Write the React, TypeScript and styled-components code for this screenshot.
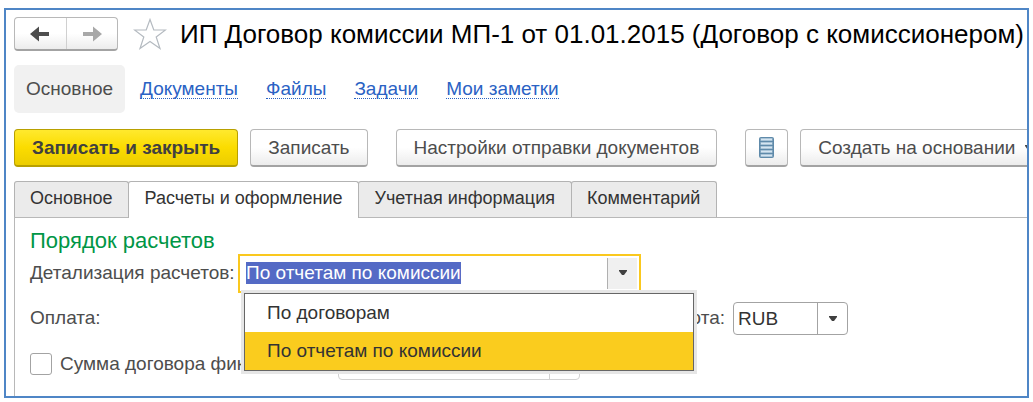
import React, { useEffect, useRef, useState } from "react";
import styled, { createGlobalStyle, css } from "styled-components";

const GlobalStyle = createGlobalStyle`
  * { box-sizing: border-box; }
  body {
    margin: 0;
    background: #ffffff;
    color: #4d4d4d;
    font: 19px/22px "Liberation Sans", Arial, sans-serif;
  }
  button, input, select { font: inherit; color: inherit; }
`;

const Page = styled.div`
  display: flex;
  flex-direction: column;
  min-height: 100vh;
  padding: 8px 4px 4px;
`;

const Frame = styled.main`
  display: flex;
  flex: 1;
  flex-direction: column;
  overflow: hidden;
  padding: 7px 0 0 8px;
  border: 2px solid #4f86c6;
  white-space: nowrap;
`;

const TitleBar = styled.header`
  display: flex;
  align-items: center;
  height: 34px;
`;

const raised = css`
  border: 1px solid #b8b8b8;
  border-bottom: 2px solid #a3a3a3;
  border-radius: 4px;
  background: linear-gradient(#ffffff 50%, #ececec);
`;

const History = styled.div`
  display: flex;
  flex: none;
  width: 104px;
  height: 34px;
  ${raised}
`;

const HistoryButton = styled.button`
  display: flex;
  flex: 1;
  align-items: center;
  justify-content: center;
  padding: 0;
  border: 0;
  background: none;
  color: #4d4d4d;

  & + & {
    border-left: 1px solid #d0d0d0;
    color: #a8a8a8;
  }
`;

const StarButton = styled.button`
  display: flex;
  flex: none;
  margin: 0 13px 0 15px;
  padding: 0;
  border: 0;
  background: none;
`;

const Title = styled.h1`
  margin: 0;
  color: #000000;
  font-size: 26px;
  font-weight: 400;
  line-height: 34px;
`;

const Nav = styled.nav`
  display: flex;
  align-items: center;
  gap: 28px;
  margin-top: 14px;
`;

const CurrentSection = styled.span`
  margin-right: -13px;
  padding: 13px 12px;
  border-radius: 5px;
  background: #f1f1f1;
`;

const SectionLink = styled.a`
  border-bottom: 1px dotted #2a62c4;
  color: #2a62c4;
  line-height: 19px;
  text-decoration: none;
`;

const Toolbar = styled.div`
  display: flex;
  gap: 28px;
  margin-top: 16px;
`;

const ButtonGroup = styled.div`
  display: flex;
  gap: 12px;
`;

const Button = styled.button<{ $primary?: boolean }>`
  display: flex;
  flex: none;
  align-items: center;
  gap: 10px;
  height: 38px;
  padding: 0 17px;
  ${raised}
  ${({ $primary }) =>
    $primary &&
    css`
      border-color: #b8a000;
      background: linear-gradient(#ffe92e, #fbdc00 50%, #eccd00);
      color: #404040;
      font-weight: 700;
    `}
`;

const IconButton = styled(Button)`
  padding: 0 13px;
`;

const Tabs = styled.div`
  display: flex;
  margin-top: 14px;
  border-bottom: 1px solid #b8b8b8;
`;

const Tab = styled.button<{ $active?: boolean }>`
  height: 36px;
  margin-right: -1px;
  padding: 0 16px 3px 15px;
  border: 1px solid #b3b3b3;
  border-bottom: 0;
  border-radius: 3px 3px 0 0;
  background: #ebebeb;
  color: #333333;
  font-size: 18px;
  ${({ $active }) =>
    $active &&
    css`
      z-index: 1;
      height: 37px;
      margin-bottom: -1px;
      padding-bottom: 4px;
      background: #ffffff;
    `}
`;

const Panel = styled.section`
  flex: 1;
  padding: 10px 15px 16px;
  border-left: 1px solid #b8b8b8;
`;

const GroupTitle = styled.h2`
  margin: 0;
  color: #009646;
  font-size: 22px;
  font-weight: 400;
  line-height: 26px;
`;

const Row = styled.div`
  display: flex;
  align-items: center;
`;

const Label = styled.label`
  flex: none;
  width: 208px;
  padding-bottom: 2px;
`;

const SideLabel = styled.label`
  flex: none;
  width: 487px;
  margin-right: 8px;
  padding-bottom: 2px;
  text-align: right;
`;

const Combo = styled.div`
  position: relative;
  display: flex;
  width: 403px;
  height: 39px;
  padding: 2px;
  border: 2px solid #fac81e;
  background: #ffffff;
`;

const ComboInput = styled.input`
  flex: 1;
  min-width: 0;
  padding: 0 4px 2px;
  border: 0;
  outline: 0;
  background: none;

  &::selection {
    background: rgba(82, 104, 196, 0.99);
    color: #ffffff;
  }
`;

const ComboToggle = styled.button`
  display: flex;
  align-items: center;
  justify-content: center;
  width: 30px;
  padding: 0 0 2px;
  border: 0;
  border-left: 1px solid #b0b0b0;
  background: #f0f0f0;
  color: #404040;
`;

const Options = styled.ul`
  position: absolute;
  z-index: 2;
  top: 37px;
  left: 4px;
  width: 450px;
  margin: 0;
  padding: 0;
  border: 1px solid #666666;
  background: #ffffff;
  box-shadow: 0 0 0 3px #e6e6e6;
  list-style: none;
`;

const Option = styled.li`
  padding: 8px 22px;
  color: #333333;
  cursor: default;

  &[aria-selected="true"] {
    background: #facc1e;
  }
`;

const PaymentRow = styled(Row)`
  margin-top: 9px;
`;

const SelectBox = styled.span`
  display: grid;
  grid-template-columns: 1fr 30px;
  width: 115px;
  height: 33px;
  border: 1px solid #a3a3a3;
  border-radius: 4px;
`;

const Select = styled.select`
  grid-area: 1 / 1 / 2 / 3;
  padding: 0 4px;
  border: 0;
  outline: 0;
  background: none;
  color: #333333;
  appearance: none;
`;

const SelectArrow = styled.span`
  display: flex;
  grid-area: 1 / 2;
  align-items: center;
  justify-content: center;
  border-left: 1px solid #a3a3a3;
  color: #404040;
  pointer-events: none;
`;

const AmountRow = styled(Row)`
  margin-top: 12px;
`;

const CheckLabel = styled.label`
  display: flex;
  flex: none;
  align-items: center;
  gap: 8px;
  width: 308px;
`;

const Checkbox = styled.input`
  flex: none;
  width: 22px;
  height: 22px;
  margin: 0;
  border: 1px solid #a3a3a3;
  border-radius: 3px;
  appearance: none;
  background: #ffffff;

  &:checked {
    background: #facc1e;
  }
`;

const AmountBox = styled.span`
  display: grid;
  grid-template-columns: 1fr 30px;
  width: 242px;
  height: 33px;
  border: 1px solid #d2d2d2;
  border-radius: 4px;
`;

const AmountInput = styled.input`
  min-width: 0;
  padding: 0 4px;
  border: 0;
  outline: 0;
  background: none;
`;

const AmountButton = styled.button`
  padding: 0;
  border: 0;
  border-left: 1px solid #d2d2d2;
  background: none;
`;

const ArrowIcon = ({ right }: { right?: boolean }) => (
  <svg width="20" height="16" viewBox="0 0 20 16" aria-hidden="true">
    <path
      d={right ? "M20 8 11 0.5v5.5H1v4h10v5.5z" : "M0 8 9 0.5v5.5h10v4H9v5.5z"}
      fill="currentColor"
    />
  </svg>
);

const Caret = () => (
  <svg width="8" height="5" viewBox="0 0 8 5" aria-hidden="true">
    <path d="M0 0h8v1L5 5H3L0 1z" fill="currentColor" />
  </svg>
);

const StarIcon = () => (
  <svg width="34" height="32" viewBox="0 0 34 32" aria-hidden="true">
    <path
      d="M17 1.5 20.8 12H32.5L23.2 19 27 30.5 17 23.6 7 30.5 10.8 19 1.5 12H13.2z"
      fill="#ffffff"
      stroke="#b4bac0"
      strokeWidth="1.2"
    />
  </svg>
);

const ListIcon = () => (
  <svg width="15" height="21" viewBox="0 0 15 21" aria-hidden="true">
    <rect x="0.5" y="0.5" width="14" height="20" rx="1" fill="#7fa3bd" stroke="#5f8aaa" />
    <path d="M2 2.5h11M2 6.5h11M2 10.5h11M2 14.5h11M2 18.5h11" stroke="#d5e5f1" strokeWidth="2" />
    <path d="M0 4.5h15M0 8.5h15M0 12.5h15M0 16.5h15" stroke="#5f8aaa" />
  </svg>
);

const sections = ["Документы", "Файлы", "Задачи", "Мои заметки"];
const tabs = ["Основное", "Расчеты и оформление", "Учетная информация", "Комментарий"];
const details = ["По договорам", "По отчетам по комиссии"];

export default function App() {
  const [tab, setTab] = useState(tabs[1]);
  const [detail, setDetail] = useState(details[1]);
  const [open, setOpen] = useState(true);
  const detailRef = useRef<HTMLInputElement>(null);

  useEffect(() => {
    detailRef.current?.focus();
    detailRef.current?.select();
  }, []);

  return (
    <Page>
      <GlobalStyle />
      <Frame>
        <TitleBar>
          <History>
            <HistoryButton type="button" aria-label="Назад">
              <ArrowIcon />
            </HistoryButton>
            <HistoryButton type="button" aria-label="Вперед">
              <ArrowIcon right />
            </HistoryButton>
          </History>
          <StarButton type="button" aria-label="Избранное">
            <StarIcon />
          </StarButton>
          <Title>ИП Договор комиссии МП-1 от 01.01.2015 (Договор с комиссионером)</Title>
        </TitleBar>

        <Nav>
          <CurrentSection aria-current="page">Основное</CurrentSection>
          {sections.map((name) => (
            <SectionLink key={name} href="#">
              {name}
            </SectionLink>
          ))}
        </Nav>

        <Toolbar>
          <ButtonGroup>
            <Button type="button" $primary>
              Записать и закрыть
            </Button>
            <Button type="button">Записать</Button>
          </ButtonGroup>
          <Button type="button">Настройки отправки документов</Button>
          <ButtonGroup>
            <IconButton type="button" aria-label="Список">
              <ListIcon />
            </IconButton>
            <Button type="button">
              Создать на основании
              <Caret />
            </Button>
          </ButtonGroup>
        </Toolbar>

        <Tabs role="tablist">
          {tabs.map((name) => (
            <Tab
              key={name}
              type="button"
              role="tab"
              aria-selected={name === tab}
              $active={name === tab}
              onClick={() => setTab(name)}
            >
              {name}
            </Tab>
          ))}
        </Tabs>

        <Panel role="tabpanel">
          <GroupTitle>Порядок расчетов</GroupTitle>
          <Row>
            <Label htmlFor="detail">Детализация расчетов:</Label>
            <Combo>
              <ComboInput
                id="detail"
                ref={detailRef}
                role="combobox"
                aria-expanded={open}
                aria-controls="detail-options"
                value={detail}
                onChange={(event) => setDetail(event.target.value)}
              />
              <ComboToggle type="button" aria-label="Выбрать" onClick={() => setOpen(!open)}>
                <Caret />
              </ComboToggle>
              {open && (
                <Options id="detail-options" role="listbox">
                  {details.map((name) => (
                    <Option
                      key={name}
                      role="option"
                      aria-selected={name === detail}
                      onClick={() => {
                        setDetail(name);
                        setOpen(false);
                      }}
                    >
                      {name}
                    </Option>
                  ))}
                </Options>
              )}
            </Combo>
          </Row>
          <PaymentRow>
            <Label as="span">Оплата:</Label>
            <SideLabel htmlFor="currency">Валюта:</SideLabel>
            <SelectBox>
              <Select id="currency" defaultValue="RUB">
                <option>RUB</option>
              </Select>
              <SelectArrow>
                <Caret />
              </SelectArrow>
            </SelectBox>
          </PaymentRow>
          <AmountRow>
            <CheckLabel>
              <Checkbox type="checkbox" />
              Сумма договора фиксирована
            </CheckLabel>
            <AmountBox>
              <AmountInput aria-label="Сумма договора" />
              <AmountButton type="button" aria-label="Калькулятор" />
            </AmountBox>
          </AmountRow>
        </Panel>
      </Frame>
    </Page>
  );
}
